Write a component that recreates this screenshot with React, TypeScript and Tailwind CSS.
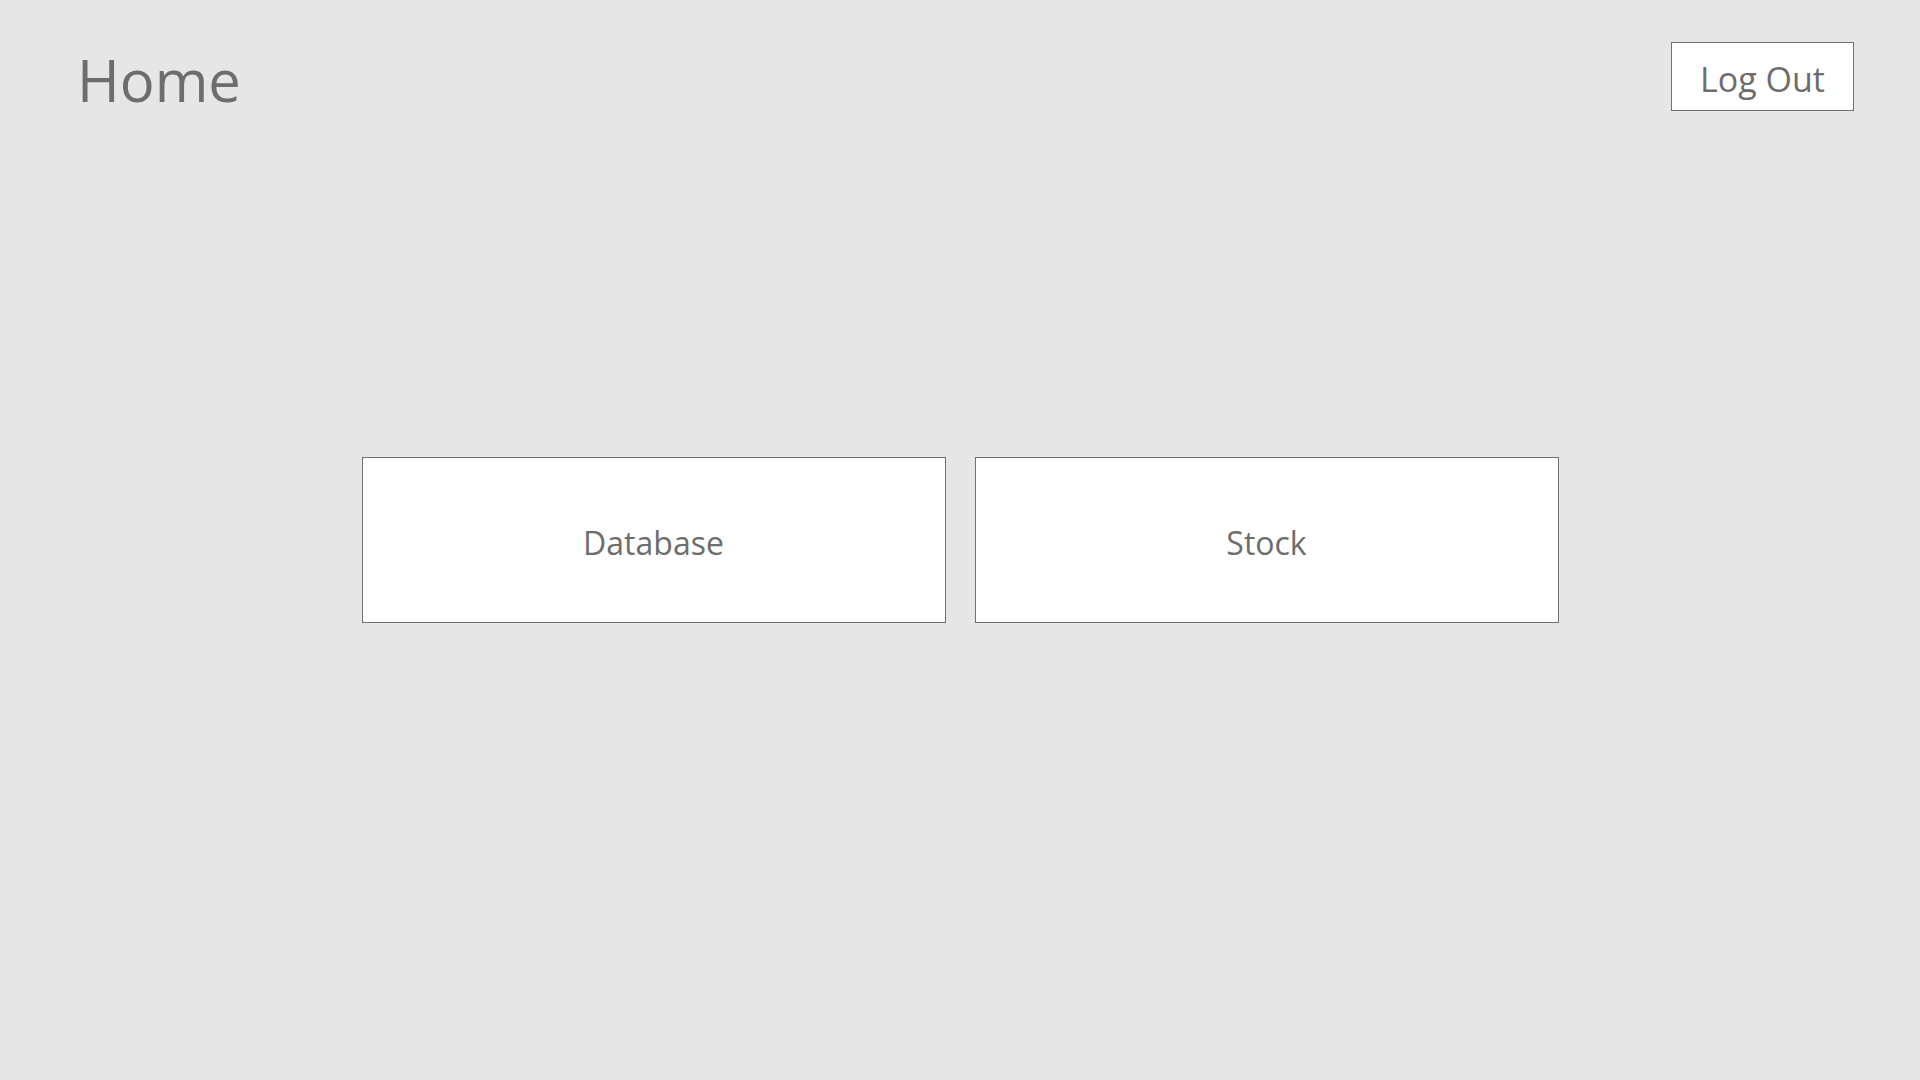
export default function App() {
  return (
    <div className="flex h-screen w-full flex-col bg-[#e6e6e6] text-[#6d6d6d]" style={{ fontFamily: '"Open Sans", "Noto Sans", sans-serif' }}>
      <header className="flex h-[153px] items-start justify-between pl-[77px] pr-[66px] pt-[42px]">
        <h1 className="mt-[6px] text-[58px] leading-[64px] font-normal">Home</h1>
        <button className="flex h-[69px] w-[183px] items-center justify-center border border-[#707070] bg-white pt-[6px] text-[34px] text-[#6d6d6d]">
          Log Out
        </button>
      </header>

      <main className="flex flex-1 items-center justify-center gap-[29px]">
        <button className="flex h-[166px] w-[584px] items-center justify-center border border-[#707070] bg-white pt-[5px] text-[32px] text-[#6d6d6d]">
          Database
        </button>
        <button className="flex h-[166px] w-[584px] items-center justify-center border border-[#707070] bg-white pt-[5px] text-[32px] text-[#6d6d6d]">
          Stock
        </button>
      </main>

      <div className="h-[153px]" />
    </div>
  );
}
